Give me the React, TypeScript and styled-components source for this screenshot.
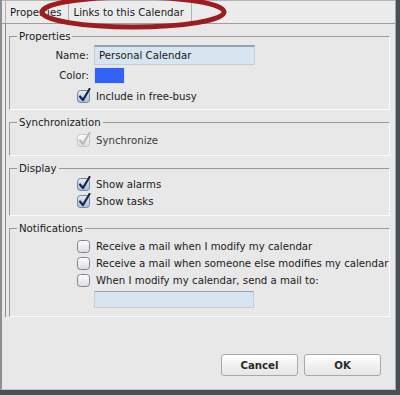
import React, { FC } from 'react';
import styled, { createGlobalStyle } from 'styled-components';

const GlobalStyle = createGlobalStyle`
  html, body {
    margin: 0;
    padding: 0;
    background: #4a4f56;
    width: 400px;
    height: 395px;
    overflow: hidden;
  }
  * {
    box-sizing: border-box;
  }
`;

const Dialog = styled.div`
  position: relative;
  display: flex;
  flex-direction: column;
  width: 396px;
  height: 390px;
  background: #e8e8e8;
  border-left: 2px solid #8e8e8e;
  border-right: 1px solid #a9a9a9;
  border-bottom: 1px solid #c4c4c4;
  font-family: "DejaVu Sans", "Open Sans", sans-serif;
  font-size: 10.2px;
  color: #1e1e1e;
  white-space: nowrap;
`;

const TabBar = styled.div`
  display: flex;
  height: 24px;
  padding-left: 3px;
  border-top: 1px solid #b5b5b5;
  border-bottom: 1px solid #9d9d9d;
  background: #ececec;
`;

const Tab = styled.div`
  display: flex;
  align-items: center;
  height: 100%;
  padding: 0 7px 0 4px;
  border-left: 1px solid #b0b0b0;
  color: #1a1a1a;
  &:last-child {
    border-right: 1px solid #b0b0b0;
  }
`;

const Panel = styled.div`
  display: flex;
  flex-direction: column;
  gap: 6px;
  margin-left: 3px;
  padding: 6px 5px 0 3px;
  border-left: 1px solid #8a8a8a;
`;

const Group = styled.fieldset<{ $pb: number }>`
  margin: 0;
  padding: 0 0 ${({ $pb }) => $pb}px 0;
  border-width: 1px;
  border-style: solid;
  border-color: #9a9a9a #fbfbfb #fbfbfb #9a9a9a;
  min-width: 0;
`;

const Legend = styled.legend`
  margin-left: 7px;
  padding: 0 2px;
  line-height: 13px;
  color: #1a1a1a;
`;

const FormGrid = styled.div`
  display: grid;
  grid-template-columns: 79px 1fr;
  column-gap: 5px;
  row-gap: 2px;
  padding-top: 2px;
  align-items: center;
`;

const Label = styled.div`
  text-align: right;
`;

const TextInput = styled.div<{ $w: number; $h: number }>`
  width: ${({ $w }) => $w}px;
  height: ${({ $h }) => $h}px;
  padding-left: 4px;
  display: flex;
  align-items: center;
  background: #d7e5f1;
  border: 1px solid #c4ccd4;
  border-top: 2px solid #97a2ad;
  color: #1a1a1a;
`;

const Swatch = styled.div`
  width: 31px;
  height: 17px;
  background: #3162f6;
  border: 1px solid #d8dde8;
`;

const CheckRow = styled.div<{ $dim?: boolean }>`
  grid-column: 1 / span 2;
  display: flex;
  align-items: center;
  gap: 5px;
  height: 17px;
  padding-left: 67px;
  color: ${({ $dim }) => ($dim ? '#3a3a3a' : '#1a1a1a')};
`;

const Rows = styled.div<{ $pt: number }>`
  display: flex;
  flex-direction: column;
  padding-top: ${({ $pt }) => $pt}px;
`;

const MailInput = styled(TextInput)`
  margin: 2px 0 0 84px;
  border-top: 1px solid #97a2ad;
`;

const Footer = styled.div`
  display: flex;
  justify-content: flex-end;
  gap: 6px;
  margin-top: auto;
  padding: 0 14px 13px 0;
`;

const Button = styled.button<{ $w: number }>`
  width: ${({ $w }) => $w}px;
  height: 22px;
  border: 1px solid #a9a9a9;
  border-radius: 3px;
  background: linear-gradient(#ffffff, #f1f1f1 50%, #e6e6e6);
  font-family: "DejaVu Sans", sans-serif;
  font-size: 10.2px;
  font-weight: bold;
  color: #2a2a2a;
  padding: 0;
`;

const Mark = styled.svg`
  position: absolute;
  left: -2px;
  top: 0;
  pointer-events: none;
`;

const Box = styled.svg`
  flex: none;
  margin-top: -2px;
`;

type TCheckProps = { checked?: boolean; disabled?: boolean };

const Check: FC<TCheckProps> = ({ checked, disabled }) => (
  <Box width='14' height='15' viewBox='0 0 14 15'>
    <defs>
      <linearGradient id='cbOn' x1='0' y1='0' x2='0' y2='1'>
        <stop offset='0' stopColor='#e4eefb' />
        <stop offset='1' stopColor='#9fbde6' />
      </linearGradient>
      <linearGradient id='cbOff' x1='0' y1='0' x2='0' y2='1'>
        <stop offset='0' stopColor='#ffffff' />
        <stop offset='1' stopColor='#dcdcdc' />
      </linearGradient>
    </defs>
    <rect
      x='0.5' y='2.5' width='12' height='12' rx='3'
      fill={checked && !disabled ? 'url(#cbOn)' : 'url(#cbOff)'}
      stroke={disabled ? '#c4c4c4' : '#7d8390'} />
    {checked && (
      <path
        d='M3 8.5 L6 12 L12.5 1'
        fill='none'
        stroke={disabled ? '#b8b8b8' : '#1c2540'}
        strokeWidth='2.2'
        strokeLinecap='round'
        strokeLinejoin='round' />
    )}
  </Box>
);

const App: FC = () => (
  <>
    <GlobalStyle />
    <Dialog>
      <TabBar>
        <Tab>Properties</Tab>
        <Tab>Links to this Calendar</Tab>
      </TabBar>
      <Panel>
        <Group $pb={4}>
          <Legend>Properties</Legend>
          <FormGrid>
            <Label>Name:</Label>
            <TextInput $w={161} $h={20}>Personal Calendar</TextInput>
            <Label>Color:</Label>
            <Swatch />
            <CheckRow style={{ marginTop: 2 }}>
              <Check checked />
              Include in free-busy
            </CheckRow>
          </FormGrid>
        </Group>
        <Group $pb={6}>
          <Legend>Synchronization</Legend>
          <Rows $pt={3}>
            <CheckRow $dim>
              <Check checked disabled />
              Synchronize
            </CheckRow>
          </Rows>
        </Group>
        <Group $pb={5}>
          <Legend>Display</Legend>
          <Rows $pt={1}>
            <CheckRow>
              <Check checked />
              Show alarms
            </CheckRow>
            <CheckRow>
              <Check checked />
              Show tasks
            </CheckRow>
          </Rows>
        </Group>
        <Group $pb={8}>
          <Legend>Notifications</Legend>
          <Rows $pt={3}>
            <CheckRow>
              <Check />
              Receive a mail when I modify my calendar
            </CheckRow>
            <CheckRow>
              <Check />
              Receive a mail when someone else modifies my calendar
            </CheckRow>
            <CheckRow>
              <Check />
              When I modify my calendar, send a mail to:
            </CheckRow>
            <MailInput $w={160} $h={17} />
          </Rows>
        </Group>
      </Panel>
      <Footer>
        <Button $w={77}>Cancel</Button>
        <Button $w={77}>OK</Button>
      </Footer>
      <Mark width='240' height='32' viewBox='0 0 240 32'>
        <ellipse cx='133' cy='12' rx='91' ry='15' fill='none' stroke='#9c1c22' strokeWidth='5' />
      </Mark>
    </Dialog>
  </>
);

export default App;
